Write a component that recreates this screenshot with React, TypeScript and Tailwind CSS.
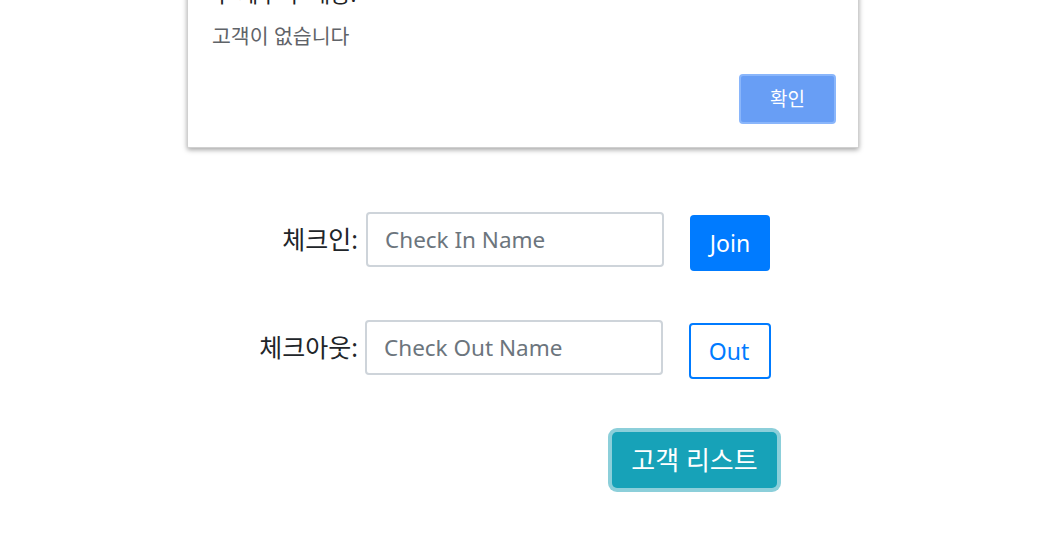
import React from "react";

const font = {
  fontFamily: '"Noto Sans", "Noto Sans CJK KR", sans-serif',
};

const AlertBox = () => (
  <div className="absolute left-[187px] top-[-60px] w-[672px] bg-white rounded-b-[2px] shadow-[0_2px_5px_rgba(0,0,0,0.35)] border border-[#d0d0d0] border-t-0 pb-[23px]">
    <div className="absolute right-[-1px] top-[60px] h-[52px] w-px bg-[#cfcfcf]" />
    <div className="pl-[24px] pt-[38px] text-[22px] leading-[30px] text-[#202124]">
      누 제주 부 내용:
    </div>
    <div className="pl-[24px] mt-[14px] text-[20.5px] leading-[28px] text-[#5f6368]">
      고객이 없습니다
    </div>
    <div className="flex justify-end pr-[22px] mt-[24px]">
      <button className="w-[97px] h-[50px] rounded-[4px] bg-[#689ef5] border-2 border-[#8ab6fb] text-white text-[19px]">
        확인
      </button>
    </div>
  </div>
);

export default function App() {
  return (
    <div style={font} className="relative w-full h-[560px] overflow-hidden bg-white text-[#212529]">
      <AlertBox />
      <div className="flex flex-col pt-[212px]">
        <div className="flex items-start">
          <label className="w-[358px] h-[55px] flex items-center justify-end text-[25px]">
            체크인:
          </label>
          <input
            placeholder="Check In Name"
            className="ml-[8px] w-[298px] h-[55px] rounded-[4px] border-2 border-[#ced4da] px-[17px] text-[22.5px] text-[#495057] placeholder:text-[#6c757d] outline-none"
          />
          <button className="ml-[26px] mt-[3px] w-[80px] h-[56px] rounded-[4px] bg-[#007bff] text-white text-[23px]">
            Join
          </button>
        </div>
        <div className="flex items-start mt-[49px]">
          <label className="w-[358px] h-[55px] flex items-center justify-end text-[25px]">
            체크아웃:
          </label>
          <input
            placeholder="Check Out Name"
            className="ml-[7px] w-[298px] h-[55px] rounded-[4px] border-2 border-[#ced4da] px-[17px] text-[22.5px] text-[#495057] placeholder:text-[#6c757d] outline-none"
          />
          <button className="ml-[26px] mt-[3px] w-[82px] h-[56px] rounded-[4px] border-2 border-[#007bff] text-[#007bff] text-[23px] pr-[2px]">
            Out
          </button>
        </div>
        <div className="flex mt-[53px] pl-[612px]">
          <button className="w-[165px] h-[56px] rounded-[5px] bg-[#17a2b8] text-white text-[26px] ring-4 ring-[#8ccfda]">
            고객 리스트
          </button>
        </div>
      </div>
    </div>
  );
}
